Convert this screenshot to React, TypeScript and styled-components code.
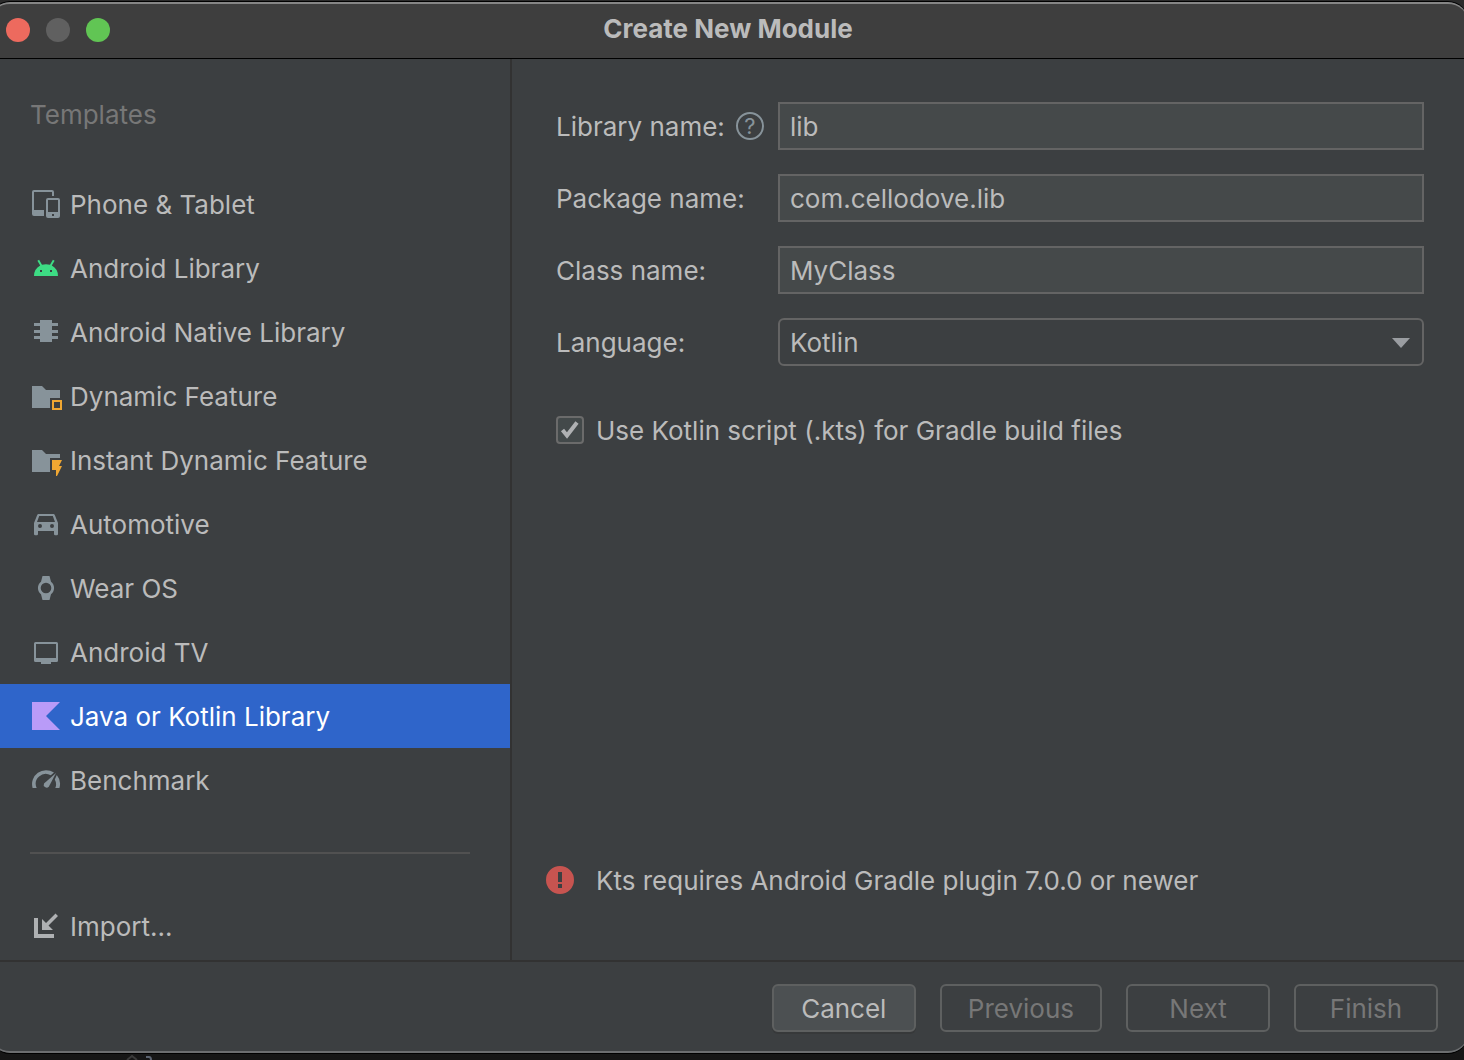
import React, { useState } from "react";
import styled, { createGlobalStyle } from "styled-components";

const color = {
  panel: "#3c3f41",
  field: "#45494a",
  border: "#646464",
  text: "#bbbbbb",
  muted: "#777777",
  line: "#323232",
  icon: "#87939a",
  orange: "#f0a732",
};

const GlobalStyle = createGlobalStyle`
  *, *::before, *::after { box-sizing: border-box; }
  body {
    margin: 0;
    background: #161616;
    color: ${color.text};
    font-family: Inter, "Liberation Sans", sans-serif;
    font-size: 26px;
    line-height: 32px;
    overflow: hidden;
  }
  button, input, select { font: inherit; color: inherit; }
`;

const Desktop = styled.div`
  display: flex;
  flex-direction: column;
  min-height: 100vh;
  padding-top: 1px;
  background: linear-gradient(#2b2b2b, #161616);
`;

const Dialog = styled.main`
  flex: 1;
  display: flex;
  flex-direction: column;
  margin: 0 -4px 0 -10px;
  padding: 0 4px 0 10px;
  border: 1px solid #000;
  border-left: 0;
  border-right: 0;
  border-radius: 20px;
  background: ${color.panel};
  overflow: hidden;
`;

const TitleBar = styled.header`
  display: grid;
  grid-template-columns: 1fr auto 1fr;
  align-items: center;
  height: 57px;
  margin: 0 -4px 0 -10px;
  padding: 0 18px 2px 16px;
  border-top: 2px solid #858585;
  border-bottom: 1px solid #000;
  border-radius: 20px 20px 0 0;
  background: #3e3e3e;
`;

const Lights = styled.div`
  display: flex;
  gap: 16px;
`;

const Light = styled.button<{ $fill: string }>`
  width: 24px;
  height: 24px;
  padding: 0;
  border: 0;
  border-radius: 50%;
  background: ${(p) => p.$fill};
`;

const Title = styled.h1`
  margin: 0;
  padding-bottom: 2px;
  font-size: 26px;
  font-weight: 700;
`;

const Body = styled.div`
  flex: 1;
  display: flex;
`;

const Sidebar = styled.aside`
  flex: 0 0 512px;
  display: flex;
  flex-direction: column;
  border-right: 2px solid ${color.line};
`;

const SidebarTitle = styled.h2`
  margin: 40px 0 41px;
  padding-left: 30px;
  font-size: 26px;
  font-weight: 400;
  color: ${color.muted};
`;

const TemplateList = styled.ul`
  margin: 0;
  padding: 0;
  list-style: none;
`;

const SidebarButton = styled.button<{ $selected?: boolean }>`
  display: flex;
  align-items: center;
  gap: 8px;
  width: 100%;
  height: 64px;
  padding: 0 30px;
  border: 0;
  background: ${(p) => (p.$selected ? "#2f65ca" : "transparent")};
  color: ${(p) => (p.$selected ? "#ffffff" : color.text)};
  text-align: left;
  white-space: nowrap;
`;

const Caption = styled.span`
  padding-top: 2px;
`;

const Divider = styled.hr`
  width: calc(100% - 70px);
  height: 2px;
  margin: 40px 40px 40px 30px;
  border: 0;
  background: #515151;
`;

const IconSvg = styled.svg`
  flex: none;
  display: block;
  width: 32px;
  height: 32px;
  fill: ${color.icon};
`;

const Content = styled.section`
  flex: 1;
  min-width: 0;
  display: flex;
  flex-direction: column;
  padding: 43px 40px 63px 44px;
`;

const Form = styled.form`
  display: grid;
  grid-template-columns: 222px 1fr;
  row-gap: 24px;
  align-items: center;
`;

const LabelCell = styled.div`
  display: flex;
  align-items: center;
  gap: 11px;
  white-space: nowrap;
`;

const FieldLabel = styled.label`
  padding-top: 2px;
`;

const HelpButton = styled.button`
  flex: none;
  width: 28px;
  height: 28px;
  padding: 0;
  border: 2px solid ${color.icon};
  border-radius: 50%;
  background: transparent;
  color: ${color.icon};
  font-size: 22px;
  line-height: 24px;
`;

const TextField = styled.input`
  width: 100%;
  height: 48px;
  padding: 0 10px;
  border: 2px solid ${color.border};
  border-radius: 0;
  background: ${color.field};
  outline: none;
`;

const SelectWrap = styled.div`
  position: relative;
`;

const Select = styled.select`
  display: block;
  width: 100%;
  height: 48px;
  padding: 2px 40px 0 10px;
  border: 2px solid ${color.border};
  border-radius: 6px;
  background: ${color.panel};
  appearance: none;
  outline: none;
`;

const SelectArrow = styled.svg`
  position: absolute;
  top: 20px;
  right: 14px;
  width: 18px;
  height: 10px;
  fill: #9a9da1;
  pointer-events: none;
`;

const CheckRow = styled.label`
  display: flex;
  align-items: center;
  gap: 12px;
  margin-top: 47px;
`;

const CheckBox = styled.span`
  position: relative;
  width: 28px;
  height: 28px;
`;

const CheckInput = styled.input`
  display: block;
  width: 28px;
  height: 28px;
  margin: 0;
  border: 2px solid #6b6b6b;
  border-radius: 4px;
  background: #43494a;
  appearance: none;
  &:not(:checked) + svg { display: none; }
`;

const CheckMark = styled.svg`
  position: absolute;
  inset: 0;
  width: 28px;
  height: 28px;
  fill: none;
  stroke: #afb1b3;
  stroke-width: 4;
  pointer-events: none;
`;

const ErrorRow = styled.p`
  display: flex;
  align-items: center;
  gap: 20px;
  margin: auto 0 0 -12px;
`;

const Footer = styled.footer`
  display: flex;
  justify-content: flex-end;
  gap: 24px;
  margin: 0 -4px 0 -10px;
  padding: 22px 30px 19px;
  border-top: 2px solid ${color.line};
  border-bottom: 2px solid #6c6e70;
  border-radius: 0 0 20px 20px;
`;

const DialogButton = styled.button`
  min-width: 144px;
  height: 48px;
  padding: 2px 26px 0;
  border: 2px solid #5e6060;
  border-radius: 6px;
  background: #4c5052;
  box-shadow: 0 2px 0 #37393a;
  &:disabled {
    background: transparent;
    color: ${color.muted};
    box-shadow: none;
  }
`;

const EditorStrip = styled.svg`
  display: block;
  width: 160px;
  height: 6px;
`;

const PhoneIcon = () => (
  <IconSvg viewBox="0 0 32 32" aria-hidden>
    <path fillRule="evenodd" d="M4 2h18a2 2 0 0 1 2 2v4h-2V4H4v18h10v6H4a2 2 0 0 1-2-2V4a2 2 0 0 1 2-2zM18 10h10a2 2 0 0 1 2 2v16a2 2 0 0 1-2 2H18a2 2 0 0 1-2-2V12a2 2 0 0 1 2-2zm0 2v12h10V12zm4 14v2h2v-2z" />
  </IconSvg>
);

const AndroidIcon = () => (
  <IconSvg viewBox="0 0 32 32" aria-hidden>
    <path fill="#3ddc84" fillRule="evenodd" d="M4 24a12 12 0 0 1 6.2-10.4L7.4 8.8l1.7-1 2.9 5a13 13 0 0 1 8 0l2.9-5 1.7 1-2.8 4.800A12 12 0 0 1 28 24zM10 18v2h2v-2zm10 0v2h2v-2z" />
  </IconSvg>
);

const ChipIcon = () => (
  <IconSvg viewBox="0 0 32 32" aria-hidden>
    <path d="M10 4h12v3h6v3h-6v4h6v3h-6v3h6v3h-6v3H10v-3H4v-3h6v-3H4v-3h6v-4H4V7h6z" />
  </IconSvg>
);

const FeatureIcon = () => (
  <IconSvg viewBox="0 0 32 32" aria-hidden>
    <path d="M2 6h10l4 4h14v8h-10v10H2z" />
    <path fill={color.orange} fillRule="evenodd" d="M22 20h10v10H22zm2 2v6h6v-6z" />
  </IconSvg>
);

const InstantIcon = () => (
  <IconSvg viewBox="0 0 32 32" aria-hidden>
    <path d="M2 6h10l4 4h14v4H20v14H2z" />
    <path fill={color.orange} d="M22 16h10l-3 6h3l-5 10h-1v-6h-4z" />
  </IconSvg>
);

const CarIcon = () => (
  <IconSvg viewBox="0 0 32 32" aria-hidden>
    <path fillRule="evenodd" d="M9 6h14c1 0 1.600.5 2 1.400L28 15v11a1.200 1.200 0 0 1-1.200 1.200h-1.600A1.200 1.200 0 0 1 24 26v-3H8v3a1.200 1.200 0 0 1-1.200 1.200H5.200A1.200 1.200 0 0 1 4 26V15l3-7.600C7.400 6.500 8 6 9 6zm.2 2L7 14h18l-2.200-6zM10 16a2 2 0 1 0 0 4 2 2 0 0 0 0-4zm12 0a2 2 0 1 0 0 4 2 2 0 0 0 0-4z" />
  </IconSvg>
);

const WatchIcon = () => (
  <IconSvg viewBox="0 0 32 32" aria-hidden>
    <path fillRule="evenodd" d="M12.500 4h7l1.500 5.700a8 8 0 0 1 0 12.600L19.500 28h-7L11 22.300a8 8 0 0 1 0-12.600zM16 10.700a5.300 5.300 0 1 0 0 10.600 5.300 5.300 0 0 0 0-10.600z" />
  </IconSvg>
);

const TvIcon = () => (
  <IconSvg viewBox="0 0 32 32" aria-hidden>
    <path fillRule="evenodd" d="M5.500 6h21A1.500 1.500 0 0 1 28 7.500v17a1.500 1.500 0 0 1-1.500 1.500H21v2H11v-2H5.500A1.500 1.500 0 0 1 4 24.500v-17A1.500 1.500 0 0 1 5.500 6zM6 8v14h20V8z" />
  </IconSvg>
);

const KotlinIcon = () => (
  <IconSvg viewBox="0 0 32 32" aria-hidden>
    <path fill="#b99bf8" d="M2 2h28L16 16l14 14H2z" />
  </IconSvg>
);

const GaugeIcon = () => (
  <IconSvg viewBox="0 0 32 32" aria-hidden>
    <path d="M2.600 24A14 14 0 0 1 24 8.600l-3.200 2.600A10 10 0 0 0 6.700 24zM29.400 24a14 14 0 0 0-2.600-13l-2 4.400a10 10 0 0 1 .5 8.600z" />
    <path d="M26 9l-7.200 13.800a3 3 0 0 1-4.800-3.400z" />
  </IconSvg>
);

const ImportIcon = () => (
  <IconSvg viewBox="0 0 32 32" aria-hidden>
    <path fill="#afb1b3" d="M4 8h4v16h16v4H4z" />
    <path fill="#afb1b3" d="M12 9l4 4 9.500-9.500 2.500 2.500-9.500 9.500L23 20H12z" />
  </IconSvg>
);

const ErrorIcon = () => (
  <IconSvg viewBox="0 0 32 32" aria-hidden>
    <path fill="#c75450" fillRule="evenodd" d="M16 2a14 14 0 1 0 0 28 14 14 0 0 0 0-28zM14 8h4v10h-4zM14 20h4v4h-4z" />
  </IconSvg>
);

const templates = [
  { name: "Phone & Tablet", Icon: PhoneIcon },
  { name: "Android Library", Icon: AndroidIcon },
  { name: "Android Native Library", Icon: ChipIcon },
  { name: "Dynamic Feature", Icon: FeatureIcon },
  { name: "Instant Dynamic Feature", Icon: InstantIcon },
  { name: "Automotive", Icon: CarIcon },
  { name: "Wear OS", Icon: WatchIcon },
  { name: "Android TV", Icon: TvIcon },
  { name: "Java or Kotlin Library", Icon: KotlinIcon },
  { name: "Benchmark", Icon: GaugeIcon },
];

export default function App() {
  const [selected, setSelected] = useState("Java or Kotlin Library");

  return (
    <Desktop>
      <GlobalStyle />
      <Dialog>
        <TitleBar>
          <Lights>
            <Light $fill="#ed6a5e" aria-label="Close" />
            <Light $fill="#606060" aria-label="Minimize" />
            <Light $fill="#61c554" aria-label="Zoom" />
          </Lights>
          <Title>Create New Module</Title>
        </TitleBar>
        <Body>
          <Sidebar>
            <SidebarTitle>Templates</SidebarTitle>
            <TemplateList>
              {templates.map(({ name, Icon }) => (
                <li key={name}>
                  <SidebarButton
                    type="button"
                    $selected={name === selected}
                    aria-pressed={name === selected}
                    onClick={() => setSelected(name)}
                  >
                    <Icon />
                    <Caption>{name}</Caption>
                  </SidebarButton>
                </li>
              ))}
            </TemplateList>
            <Divider />
            <SidebarButton type="button">
              <ImportIcon />
              <Caption>Import...</Caption>
            </SidebarButton>
          </Sidebar>
          <Content>
            <Form>
              <LabelCell>
                <FieldLabel htmlFor="library">Library name:</FieldLabel>
                <HelpButton type="button" aria-label="Library name help">?</HelpButton>
              </LabelCell>
              <TextField id="library" defaultValue="lib" />
              <LabelCell>
                <FieldLabel htmlFor="package">Package name:</FieldLabel>
              </LabelCell>
              <TextField id="package" defaultValue="com.cellodove.lib" />
              <LabelCell>
                <FieldLabel htmlFor="class">Class name:</FieldLabel>
              </LabelCell>
              <TextField id="class" defaultValue="MyClass" />
              <LabelCell>
                <FieldLabel htmlFor="language">Language:</FieldLabel>
              </LabelCell>
              <SelectWrap>
                <Select id="language" defaultValue="Kotlin">
                  <option>Kotlin</option>
                  <option>Java</option>
                </Select>
                <SelectArrow viewBox="0 0 18 10" aria-hidden>
                  <path d="M0 0h18L9 10z" />
                </SelectArrow>
              </SelectWrap>
            </Form>
            <CheckRow>
              <CheckBox>
                <CheckInput type="checkbox" defaultChecked />
                <CheckMark viewBox="0 0 28 28" aria-hidden>
                  <path d="M6.500 14l4.500 5.500L21 6.500" />
                </CheckMark>
              </CheckBox>
              <Caption>Use Kotlin script (.kts) for Gradle build files</Caption>
            </CheckRow>
            <ErrorRow role="alert">
              <ErrorIcon />
              <Caption>Kts requires Android Gradle plugin 7.0.0 or newer</Caption>
            </ErrorRow>
          </Content>
        </Body>
        <Footer>
          <DialogButton type="button">Cancel</DialogButton>
          <DialogButton type="button" disabled>Previous</DialogButton>
          <DialogButton type="button" disabled>Next</DialogButton>
          <DialogButton type="button" disabled>Finish</DialogButton>
        </Footer>
      </Dialog>
      <EditorStrip viewBox="0 0 160 6" aria-hidden>
        <path d="M127 6l5-4 5 4" fill="none" stroke="#3a3a3a" strokeWidth="2" />
        <path d="M146 3h3q2 0 2 3" fill="none" stroke="#5b6370" strokeWidth="2" />
      </EditorStrip>
    </Desktop>
  );
}
